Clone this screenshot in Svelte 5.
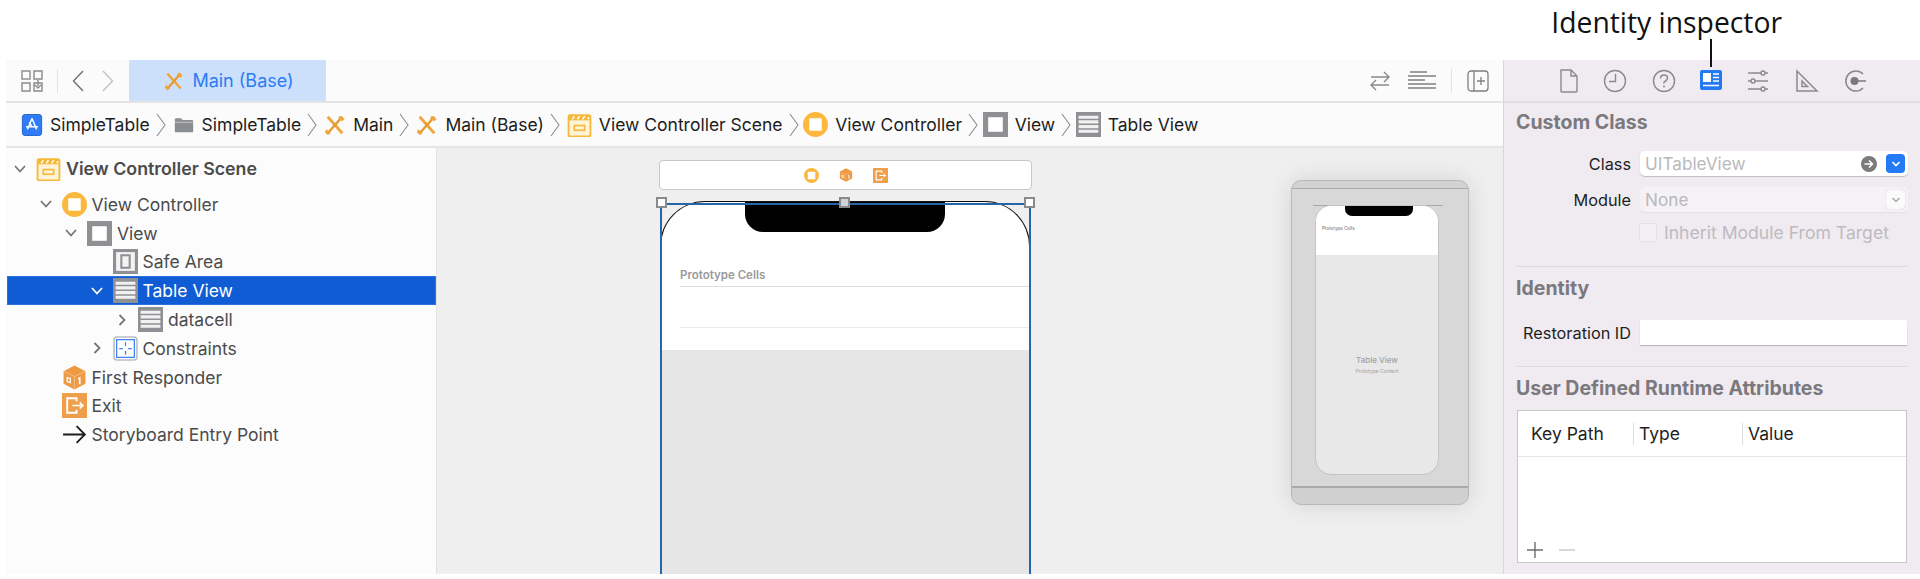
<script>
	const crumbs = [
		{ icon: 'app', size: 22, label: 'SimpleTable' },
		{ icon: 'folder', size: 22, label: 'SimpleTable' },
		{ icon: 'tools', size: 22, label: 'Main' },
		{ icon: 'tools', size: 22, label: 'Main (Base)' },
		{ icon: 'scene', size: 25, label: 'View Controller Scene' },
		{ icon: 'vc', size: 25, label: 'View Controller', tight: true },
		{ icon: 'view', size: 25, label: 'View', tight: true },
		{ icon: 'table', size: 25, label: 'Table View', tight: true }
	];

	const rows = [
		{ depth: 0, open: true, icon: 'scene', label: 'View Controller Scene', bold: true },
		{ depth: 1, open: true, icon: 'vc', label: 'View Controller' },
		{ depth: 2, open: true, icon: 'view', label: 'View' },
		{ depth: 3, icon: 'safe', label: 'Safe Area' },
		{ depth: 3, open: true, icon: 'table', label: 'Table View', selected: true },
		{ depth: 4, closed: true, icon: 'table', label: 'datacell' },
		{ depth: 3, closed: true, icon: 'constraints', label: 'Constraints' },
		{ depth: 1, icon: 'cube', label: 'First Responder' },
		{ depth: 1, icon: 'exit', label: 'Exit' },
		{ depth: 1, icon: 'arrow', label: 'Storyboard Entry Point' }
	];
</script>

{#snippet glyph(name, size)}
	<svg width={size} height={size} viewBox="0 0 24 24" fill="none" class="glyph">
		{#if name === 'app'}
			<rect x="1.500" y="0.500" width="21" height="23" rx="3" fill="#2f7cf6" stroke="#1a5fc8" />
			<path d="M12 5 7 17M12 5l5 12M5.500 14h13M9 9l3 5" stroke="#fff" stroke-width="1.600" />
		{:else if name === 'folder'}
			<path d="M2 6q0-1.500 1.500-1.500h5l2 2H21q1 0 1 1V19q0 1-1 1H3q-1 0-1-1z" fill="#8b8e91" />
			<path d="M2 9h20" stroke="#c9cacc" stroke-width="1" />
		{:else if name === 'tools'}
			<path d="M4 3 20 21" stroke="#eea53a" stroke-width="3" />
			<path d="M20 3 5 20" stroke="#e59a2c" stroke-width="2.600" />
			<path d="M17 2l5.500 3.500-2.500 2.500-4.500-3zM2.500 16.500l5 4.500-3.500 2-3-3z" fill="#eea53a" />
		{:else if name === 'scene'}
			<path d="M3 3h18q1.500 0 1.500 1.500V22q0 1.500-1.500 1.500H3q-1.500 0-1.500-1.500V4.500Q1.500 3 3 3z" fill="#fff4d8" stroke="#f6b93b" stroke-width="1.800" />
			<path d="M2 3h20v5H2z" fill="#f6b93b" />
			<path d="M5 7l2-3M10 7l2-3M15 7l2-3M20 7l1-2" stroke="#fff" stroke-width="1.400" />
			<rect x="7" y="13" width="10" height="4.500" fill="none" stroke="#f6b93b" stroke-width="1.600" />
		{:else if name === 'vc'}
			<circle cx="12" cy="12" r="12" fill="#fbb83c" />
			<rect x="6" y="6" width="12" height="12" rx="1" fill="#fff" />
		{:else if name === 'view'}
			<rect width="24" height="24" fill="#8f9094" />
			<rect x="5" y="5" width="14" height="14" fill="#fff" />
		{:else if name === 'safe'}
			<rect width="24" height="24" fill="#8f9094" />
			<rect x="3" y="3" width="18" height="18" fill="#f4f4f4" />
			<rect x="7" y="5" width="10" height="14" fill="#8f9094" />
			<rect x="9" y="7" width="6" height="10" fill="#f4f4f4" />
		{:else if name === 'table'}
			<rect width="24" height="24" fill="#8f9094" />
			<path d="M2.500 5h19M2.500 9.500h19M2.500 14h19M2.500 18.500h19" stroke="#f1f1f1" stroke-width="3" />
		{:else if name === 'constraints'}
			<rect x="1" y="1" width="22" height="22" rx="3" fill="#fff" stroke="#b9bcc2" stroke-width="1.500" />
			<rect x="3.500" y="3.500" width="17" height="17" stroke="#3b82f6" stroke-width="1.200" />
			<path d="M12 6v3.500M12 14.500V18M6 12h3.500M14.500 12H18" stroke="#3b82f6" stroke-width="1.200" />
		{:else if name === 'cube'}
			<path d="M12 0.500 22.500 6v12L12 23.500 1.500 18V6z" fill="#ee9a45" />
			<path d="M1.500 6 12 11l10.500-5M12 11v12" stroke="#f8c189" stroke-width="0.800" />
			<path d="M5 12l3 1v4l-3-1z" stroke="#fff" stroke-width="1.200" />
			<path d="M15.500 13.500 17 12.500v6" stroke="#fff" stroke-width="1.600" />
		{:else if name === 'exit'}
			<rect width="24" height="24" fill="#ee9f4c" />
			<path d="M14 8V5H5v14h9v-3" stroke="#fff" stroke-width="1.800" />
			<path d="M10 12h10M17 9l3 3-3 3" stroke="#fff" stroke-width="1.500" />
		{:else if name === 'arrow'}
			<path d="M1 12h21M14 4l8 8-8 8" stroke="#1c1c1c" stroke-width="1.700" />
		{/if}
	</svg>
{/snippet}

{#snippet chevron()}
	<svg class="crumb-chevron" width="10" height="24" viewBox="0 0 10 24" fill="none">
		<path d="M1 1l8 11-8 11" stroke="#8e8e8e" stroke-width="1.100" />
	</svg>
{/snippet}

<div class="page">
	<header class="callout">
		<span class="callout-label">Identity inspector</span>
	</header>

	<div class="window">
		<div class="editor">
			<div class="toolbar">
				<svg class="tool-grid" width="22" height="24" viewBox="0 0 22 24" fill="none" stroke="#8a8a8a" stroke-width="1.400">
					<rect x="1" y="2" width="8" height="8" />
					<path d="M13 2h8v8h-8zM1 14h8v8H1zM13 14h8v8h-8zM17 11v6M14 16l3 3 3-3" />
				</svg>
				<span class="tool-sep"></span>
				<svg class="nav" width="12" height="22" viewBox="0 0 12 22" fill="none"><path d="M11 1 1.500 11 11 21" stroke="#6f6f6f" stroke-width="1.400" /></svg>
				<svg class="nav next" width="12" height="22" viewBox="0 0 12 22" fill="none"><path d="M1 1l9.500 10L1 21" stroke="#c2c2c2" stroke-width="1.400" /></svg>
				<div class="tab">
					{@render glyph('tools', 20)}
					<span>Main (Base)</span>
				</div>
				<div class="tool-right">
					<svg width="24" height="24" viewBox="0 0 24 24" fill="none" stroke="#8a8a8a" stroke-width="1.400">
						<path d="M3 8h18M16 3l5 5-5 5M21 16H3M8 11l-5 5 5 5" />
					</svg>
					<svg class="lines" width="28" height="20" viewBox="0 0 28 20" fill="none" stroke="#808080" stroke-width="1.400">
						<path d="M2 1h17M0 5h28M0 9h17M0 13h28M0 17h28" />
					</svg>
					<span class="tool-sep"></span>
					<svg width="22" height="22" viewBox="0 0 22 22" fill="none" stroke="#7f7f7f" stroke-width="1.300">
						<rect x="1" y="1" width="20" height="20" rx="3" />
						<path d="M7 1v20M14 7v8M10 11h8" />
					</svg>
				</div>
			</div>

			<nav class="crumbs">
				{#each crumbs as crumb, i}
					{#if i > 0}{@render chevron()}{/if}
					<span class="crumb" class:tight={crumb.tight}>
						{@render glyph(crumb.icon, crumb.size)}
						<span>{crumb.label}</span>
					</span>
				{/each}
			</nav>

			<div class="main">
				<aside class="tree">
					{#each rows as row}
						<div class="row" class:selected={row.selected} class:bold={row.bold} style="padding-left: {5 + row.depth * 25.5}px">
							<span class="disclosure">
								{#if row.open}
									<svg width="14" height="10" viewBox="0 0 14 10" fill="none"><path d="M2 2l5 5.500L12 2" stroke="currentColor" stroke-width="1.800" /></svg>
								{:else if row.closed}
									<svg width="10" height="14" viewBox="0 0 10 14" fill="none"><path d="M2.500 2l5 5-5 5" stroke="currentColor" stroke-width="1.800" /></svg>
								{/if}
							</span>
							{@render glyph(row.icon, 25)}
							<span>{row.label}</span>
						</div>
					{/each}
				</aside>

				<section class="canvas">
					<div class="scene-bar">
						{@render glyph('vc', 15)}
						{@render glyph('cube', 14)}
						{@render glyph('exit', 15)}
					</div>

					<div class="phone">
						<div class="notch"></div>
						<div class="cells">
							<span class="cells-title">Prototype Cells</span>
							<div class="cell"></div>
						</div>
						<div class="table-fill"></div>
					</div>
					<div class="selection"></div>
					<span class="handle h-left"></span>
					<span class="handle h-mid"></span>
					<span class="handle h-right"></span>

					<div class="mini">
						<i class="mini-line"></i>
						<div class="mini-screen">
							<div class="mini-notch"></div>
							<div class="mini-cells">Prototype Cells</div>
							<div class="mini-fill">
								<b>Table View</b>
								<small>Prototype Content</small>
							</div>
						</div>
					</div>
				</section>
			</div>
		</div>

		<aside class="inspector">
			<div class="tabs">
				<svg width="20" height="24" viewBox="0 0 20 24" fill="none" stroke="#8a8a8a" stroke-width="1.400"><path d="M2 1h10l6 6v15q0 1-1 1H3q-1 0-1-1zM12 1v6h6" /></svg>
				<svg width="24" height="24" viewBox="0 0 24 24" fill="none" stroke="#8a8a8a" stroke-width="1.400"><circle cx="12" cy="12" r="10.500" /><path d="M12.500 5v7.500H6" /></svg>
				<svg width="24" height="24" viewBox="0 0 24 24" fill="none"><circle cx="12" cy="12" r="10.500" stroke="#8a8a8a" stroke-width="1.400" /><path d="M8.500 9.500q0-3.500 3.500-3.500t3.500 3q0 2-2 3t-1.500 2.500" stroke="#8a8a8a" stroke-width="1.500" /><circle cx="12" cy="17.500" r="1" fill="#8a8a8a" /></svg>
				<span class="tab-active">
					<svg width="22" height="22" viewBox="0 0 22 22"><rect width="22" height="20" rx="2" fill="#2479f5" /><rect x="3" y="3" width="8" height="9" fill="#fff" /><path d="M13 4h6M13 7.500h6M13 11h6M3 15.500h16" stroke="#fff" stroke-width="1.500" /></svg>
					<i class="leader"></i>
				</span>
				<svg width="24" height="24" viewBox="0 0 24 24" fill="none" stroke="#8a8a8a" stroke-width="1.400"><path d="M2 4h13M19 4h3M2 12h3M9 12h13M2 20h13M19 20h3" /><circle cx="17" cy="4" r="2" /><circle cx="7" cy="12" r="2" /><circle cx="17" cy="20" r="2" /></svg>
				<svg width="24" height="24" viewBox="0 0 24 24" fill="none" stroke="#8a8a8a" stroke-width="1.500"><path d="M2 2v20h20zM7 12v5.500h5.500z" /></svg>
				<svg width="24" height="24" viewBox="0 0 24 24" fill="none"><path d="M20 5a10 10 0 1 0 0 14" stroke="#8a8a8a" stroke-width="1.500" /><circle cx="11.500" cy="12" r="4" fill="#7a7a7a" /><path d="M15 12h8" stroke="#7a7a7a" stroke-width="1.500" /></svg>
			</div>

			<div class="panel">
				<h3>Custom Class</h3>
				<div class="field-row">
					<label for="cls">Class</label>
					<div class="input" id="cls">
						<span class="placeholder">UITableView</span>
						<svg width="16" height="16" viewBox="0 0 16 16" class="go"><circle cx="8" cy="8" r="8" fill="#7b7b7b" /><path d="M3.500 8h8M8 4.500 11.500 8 8 11.500" fill="none" stroke="#fff" stroke-width="1.500" /></svg>
						<span class="stepper"><svg width="10" height="6" viewBox="0 0 10 6" fill="none"><path d="M1.500 1 5 4.500 8.500 1" stroke="#fff" stroke-width="1.600" /></svg></span>
					</div>
				</div>
				<div class="field-row">
					<label for="mod">Module</label>
					<div class="input disabled" id="mod">
						<span class="placeholder">None</span>
						<span class="stepper off"><svg width="10" height="6" viewBox="0 0 10 6" fill="none"><path d="M1.500 1 5 4.500 8.500 1" stroke="#a9a9a9" stroke-width="1.500" /></svg></span>
					</div>
				</div>
				<div class="check-row">
					<span class="check"></span>
					<span>Inherit Module From Target</span>
				</div>
			</div>

			<div class="panel identity">
				<h3>Identity</h3>
				<div class="field-row">
					<label for="rid">Restoration ID</label>
					<div class="input" id="rid"></div>
				</div>
			</div>

			<div class="panel runtime">
				<h3>User Defined Runtime Attributes</h3>
				<div class="attr-table">
					<div class="attr-head">
						<span>Key Path</span>
						<span>Type</span>
						<span>Value</span>
					</div>
					<div class="attr-body"></div>
					<div class="attr-foot">
						<svg width="16" height="16" viewBox="0 0 16 16" fill="none"><path d="M8 0v16M0 8h16" stroke="#6e6e6e" stroke-width="1.400" /></svg>
						<svg width="16" height="16" viewBox="0 0 16 16" fill="none"><path d="M0 8h16" stroke="#c8c8c8" stroke-width="1.400" /></svg>
					</div>
				</div>
			</div>
		</aside>
	</div>
</div>

<style>
	:global(body) {
		background: #fff;
		font-family: Inter, "Noto Sans", sans-serif;
	}
	.page {
		height: 579px;
		overflow: hidden;
		display: flex;
		flex-direction: column;
		padding-left: 6px;
		padding-bottom: 5px;
		box-sizing: border-box;
	}
	.glyph {
		flex: none;
	}
	.callout {
		height: 60px;
		flex: none;
		display: flex;
		justify-content: flex-end;
		padding-right: 138px;
	}
	.callout-label {
		font-family: "Open Sans", sans-serif;
		font-size: 28.300px;
		line-height: 45px;
		color: #111;
	}
	.window {
		flex: 1;
		display: flex;
		min-height: 0;
	}
	.editor {
		flex: 1;
		display: flex;
		flex-direction: column;
		min-width: 0;
	}
	.toolbar {
		height: 41px;
		flex: none;
		display: flex;
		align-items: center;
		background: #fbfbfb;
		border-bottom: 2px solid #e4e4e4;
		padding-left: 15px;
	}
	.tool-sep {
		width: 1px;
		height: 24px;
		background: #e2e2e2;
	}
	.tool-grid + .tool-sep {
		margin: 0 14px 0 14px;
	}
	.nav.next {
		margin-left: 18px;
		margin-right: 15px;
	}
	.tab {
		align-self: stretch;
		width: 197px;
		box-sizing: border-box;
		padding-left: 3px;
		display: flex;
		align-items: center;
		justify-content: center;
		gap: 8px;
		background: #cce0fb;
		color: #2b7cf2;
		font-size: 18px;
	}
	.tool-right {
		margin-left: auto;
		display: flex;
		align-items: center;
		padding-right: 14px;
	}
	.lines {
		margin-left: 16px;
	}
	.tool-right .tool-sep {
		margin: 0 15px;
	}
	.crumbs {
		height: 43px;
		flex: none;
		display: flex;
		align-items: center;
		background: #fbfbfb;
		border-bottom: 2px solid #e6e6e6;
		padding-left: 15px;
		font-size: 17.500px;
		color: #1d1d1d;
		white-space: nowrap;
	}
	.crumb {
		display: flex;
		align-items: center;
		gap: 7px;
	}
	.crumb.tight {
		margin-left: -2.400px;
	}
	.crumb-chevron {
		margin: 0 7px 0 6px;
		flex: none;
	}
	.main {
		flex: 1;
		display: flex;
		min-height: 0;
	}
	.tree {
		width: 431px;
		box-sizing: border-box;
		flex: none;
		background: #fcfcfc;
		border-right: 1px solid #e2e2e2;
		padding-top: 6px;
		font-size: 17.500px;
		color: #4b4b4b;
	}
	.row {
		height: 28.800px;
		display: flex;
		align-items: center;
		margin-left: 1px;
		white-space: nowrap;
	}
	.row.bold {
		font-weight: 600;
		font-size: 17.800px;
		height: 36px;
		padding-bottom: 7px;
		box-sizing: border-box;
	}
	.row.selected {
		background: #0f5cd5;
		color: #fff;
		box-shadow: inset 0 0 0 1px #2b6fe0;
	}
	.disclosure {
		width: 16px;
		margin-right: 8px;
		display: flex;
		justify-content: center;
		color: #767676;
		flex: none;
	}
	.selected .disclosure {
		color: #fff;
	}
	.row .glyph {
		margin-right: 5px;
	}
	.canvas {
		flex: 1;
		position: relative;
		overflow: hidden;
		background: #efefef;
	}
	.scene-bar {
		position: absolute;
		left: 222px;
		top: 12px;
		width: 373px;
		height: 30px;
		box-sizing: border-box;
		background: #fff;
		border: 1.500px solid #c7c7c7;
		border-radius: 4px;
		display: flex;
		align-items: center;
		justify-content: center;
		gap: 20px;
	}
	.phone {
		position: absolute;
		left: 223px;
		top: 53px;
		width: 370px;
		height: 380px;
		box-sizing: border-box;
		background: #fff;
		border: 1.500px solid #111;
		border-bottom: 0;
		border-radius: 45px 45px 0 0;
		overflow: hidden;
	}
	.notch {
		position: absolute;
		left: 84px;
		top: 0;
		width: 200px;
		height: 30px;
		background: #000;
		border-radius: 0 0 18px 18px;
	}
	.cells {
		position: absolute;
		left: 19px;
		right: 0;
		top: 65px;
	}
	.cells-title {
		display: block;
		font-size: 11.500px;
		font-weight: 600;
		line-height: 17px;
		color: #9a9a9a;
	}
	.cell {
		height: 40px;
		margin-top: 2px;
		border-top: 1px solid #dedede;
		border-bottom: 1px solid #eaeaea;
	}
	.table-fill {
		position: absolute;
		left: 0;
		right: 0;
		top: 148px;
		bottom: 0;
		background: #e6e6e6;
	}
	.selection {
		position: absolute;
		left: 223px;
		top: 55px;
		width: 367px;
		height: 380px;
		border: 2px solid #2565a8;
		border-bottom: 0;
	}
	.handle {
		position: absolute;
		top: 49px;
		width: 7px;
		height: 7px;
		background: #fff;
		border: 2px solid #8a8a8a;
	}
	.h-left {
		left: 219px;
	}
	.h-mid {
		left: 402px;
		background: #cfd2d6;
	}
	.h-right {
		left: 587px;
	}
	.mini {
		position: absolute;
		left: 854px;
		top: 32px;
		width: 178px;
		height: 325px;
		box-sizing: border-box;
		background: linear-gradient(#d2d2d2 7px, #a9a9a9 7px, #a9a9a9 8px, #d8d8d8 8px, #d8d8d8 305px, #a9a9a9 305px, #a9a9a9 307px, #d0d0d0 307px);
		border: 1px solid #bdb4b6;
		border-radius: 10px;
		box-shadow: 0 0 24px rgba(0, 0, 0, 0.12);
		padding: 24px 29px 29px 23px;
	}
	.mini-line {
		position: absolute;
		left: 21px;
		width: 130px;
		top: 24px;
		height: 1px;
		background: #a9a9a9;
	}
	.mini-screen {
		height: 100%;
		border-radius: 16px;
		overflow: hidden;
		position: relative;
		background: #e8e8e8;
		border: 1px solid #c4c4c4;
		box-sizing: border-box;
		display: flex;
		flex-direction: column;
	}
	.mini-notch {
		position: absolute;
		left: 29px;
		top: 0;
		width: 68px;
		height: 10px;
		background: #000;
		border-radius: 0 0 7px 7px;
	}
	.mini-cells {
		height: 49px;
		box-sizing: border-box;
		background: #fff;
		padding: 20px 0 0 6px;
		font-size: 4.500px;
		color: #666;
		flex: none;
	}
	.mini-fill {
		flex: 1;
		display: flex;
		flex-direction: column;
		align-items: center;
		padding-top: 99px;
		color: #a2a2a2;
	}
	.mini-fill b {
		font-size: 8px;
		font-weight: 500;
		line-height: 12px;
	}
	.mini-fill small {
		font-size: 5px;
		line-height: 10px;
	}
	.inspector {
		width: 417px;
		flex: none;
		box-sizing: border-box;
		background: #efebf1;
		border-left: 1px solid #d9d6db;
		display: flex;
		flex-direction: column;
		font-size: 16.300px;
		color: #1e1e1e;
	}
	.tabs {
		height: 41px;
		flex: none;
		border-bottom: 2px solid #e1dde3;
		display: flex;
		align-items: center;
		justify-content: space-between;
		padding: 0 53px 0 55px;
	}
	.tab-active {
		position: relative;
		display: flex;
	}
	.leader {
		position: absolute;
		left: 10px;
		bottom: 25px;
		width: 2px;
		height: 28px;
		background: #111;
	}
	.panel {
		padding: 8px 12px 0 12px;
	}
	.panel h3 {
		margin: 0;
		font-size: 19.500px;
		font-weight: 700;
		line-height: 22px;
		color: #7b797d;
	}
	.panel + .panel {
		margin-top: 25px;
		border-top: 1px solid #dcd9de;
		margin-left: 13px;
		margin-right: 13px;
		padding: 10px 0 0;
	}
	.panel + .panel h3 {
		margin-left: -1px;
		white-space: nowrap;
	}
	.field-row {
		display: flex;
		align-items: center;
		gap: 9px;
		margin-top: 11px;
	}
	.panel h3 + .field-row {
		margin-top: 18px;
	}
	.field-row label {
		width: 115px;
		text-align: right;
		flex: none;
	}
	.input {
		flex: 1;
		height: 25px;
		background: #fff;
		border-radius: 5px;
		box-shadow: 0 1px 1px rgba(0, 0, 0, 0.2);
		display: flex;
		align-items: center;
		padding: 0 3px 0 5px;
	}
	.input.disabled {
		background: #f5f2f6;
		box-shadow: 0 1px 1px rgba(0, 0, 0, 0.05);
	}
	.placeholder {
		color: #b9b9bb;
		flex: 1;
		font-size: 17.200px;
	}
	.go {
		margin-right: 9px;
	}
	.stepper {
		width: 19px;
		height: 19px;
		border-radius: 4px;
		background: #2479f5;
		display: flex;
		align-items: center;
		justify-content: center;
	}
	.stepper.off {
		background: #fbfafb;
		box-shadow: 0 0 1px rgba(0, 0, 0, 0.3);
	}
	.check-row {
		display: flex;
		align-items: center;
		gap: 7px;
		margin: 11px 0 0 123px;
		color: #bdbbbf;
		font-size: 17.600px;
		white-space: nowrap;
		height: 18px;
	}
	.check {
		width: 16px;
		height: 17px;
		border: 1px solid #e3e0e5;
		border-radius: 3px;
		background: #f3f0f4;
	}
	.panel.identity {
		margin-top: 25px;
	}
	.identity h3 + .field-row {
		margin-top: 21px;
	}
	.identity .field-row label {
		width: 114px;
	}
	.identity .input {
		border-radius: 0;
	}
	.panel.runtime {
		margin-top: 21px;
	}
	.attr-table {
		margin-top: 11px;
		height: 153px;
		box-sizing: border-box;
		background: #fff;
		border: 1.500px solid #c8c8c8;
		display: flex;
		flex-direction: column;
		overflow: hidden;
		font-size: 17.500px;
	}
	.attr-head {
		height: 46px;
		flex: none;
		display: grid;
		grid-template-columns: 115px 109px 1fr;
		align-items: center;
		border-bottom: 1px solid #e5e5e5;
		box-sizing: border-box;
	}
	.attr-head span {
		padding-left: 5px;
		line-height: 22px;
		border-left: 1px solid #dedede;
	}
	.attr-head span:first-child {
		padding-left: 13px;
		border-left: 0;
	}
	.attr-body {
		flex: 1;
	}
	.attr-foot {
		display: flex;
		gap: 16px;
		padding: 0 0 4px 9px;
	}
</style>
